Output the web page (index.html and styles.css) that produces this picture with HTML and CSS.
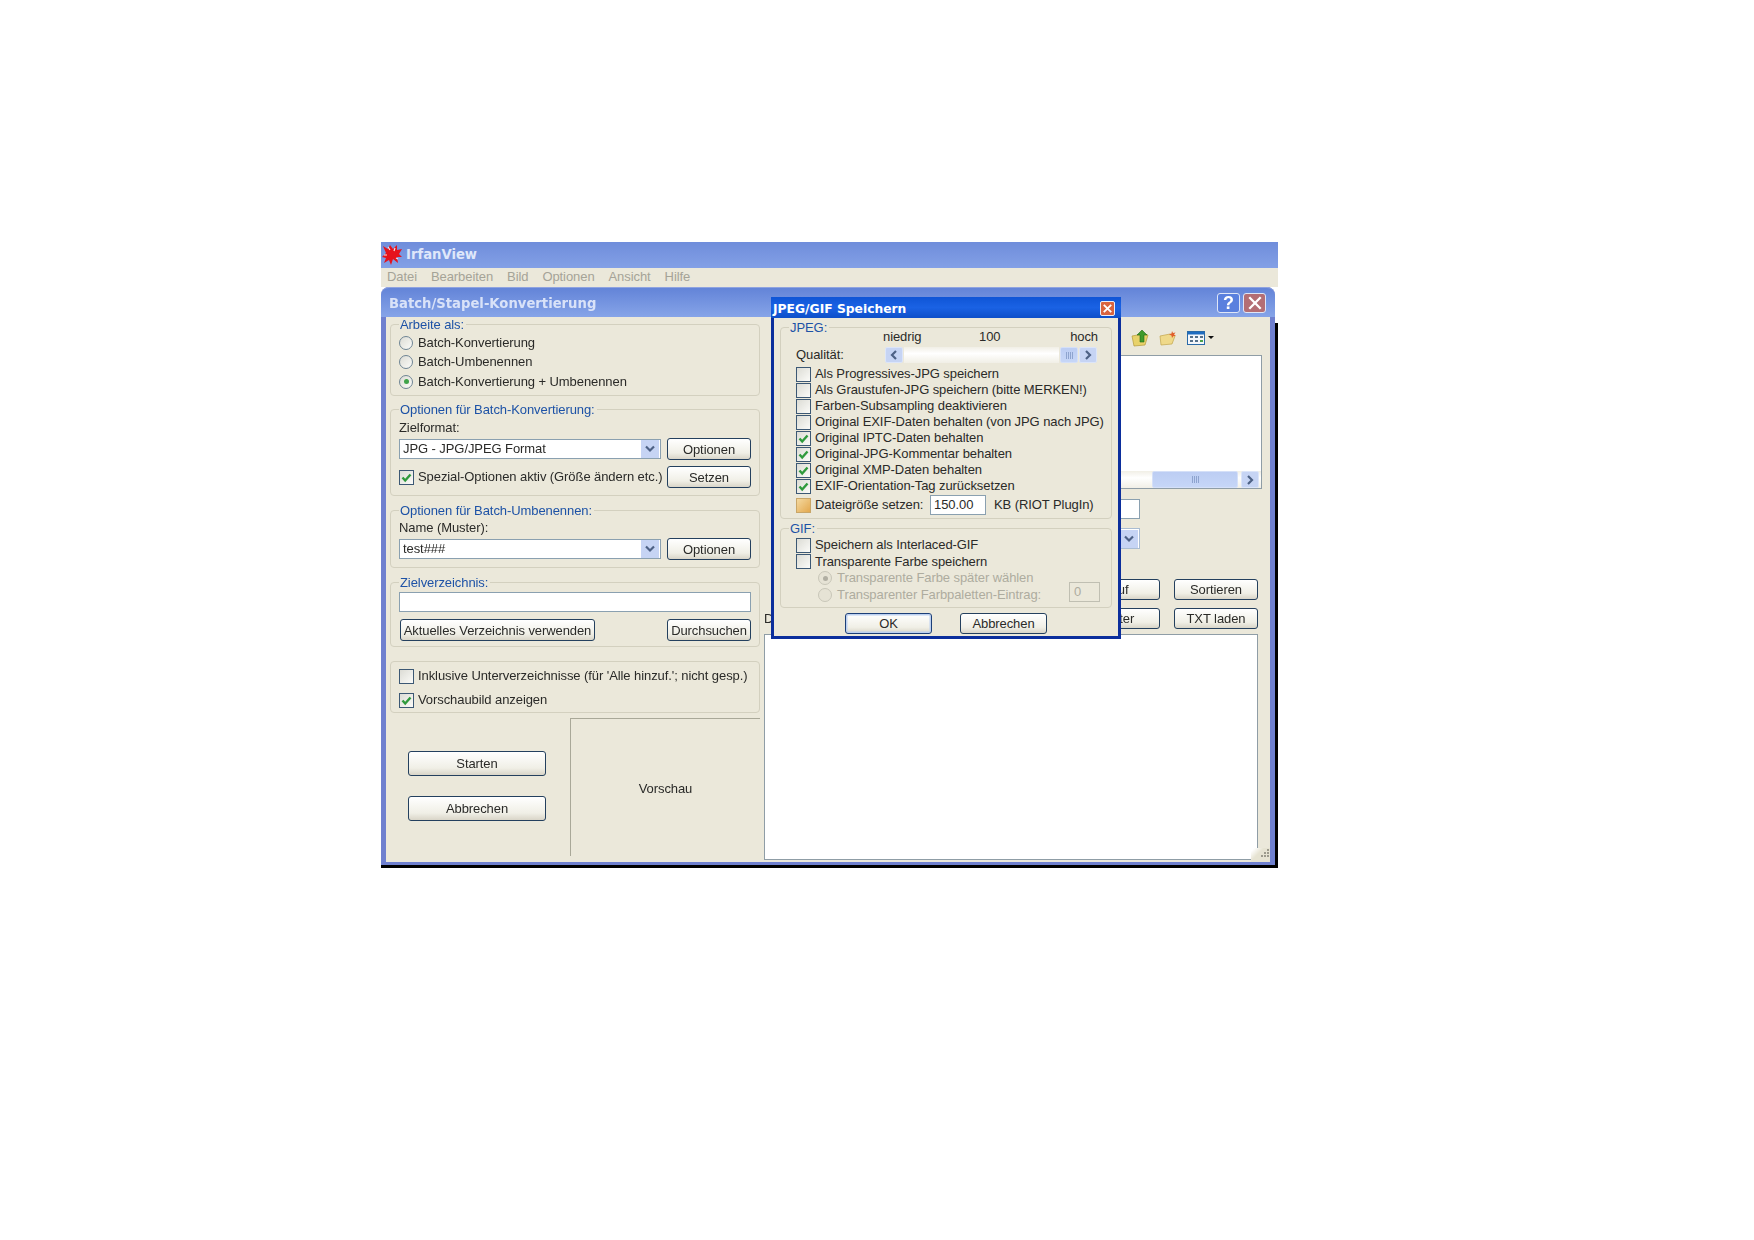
FILE: index.html
```html
<!DOCTYPE html>
<html lang="de">
<head>
<meta charset="utf-8">
<title>IrfanView</title>
<link rel="stylesheet" href="styles.css">
</head>
<body>
<svg class="defs" aria-hidden="true">
  <symbol id="check" viewBox="0 0 13 13"><path d="M2.5 6.500 5.200 9.500 10.500 3.500" fill="none" stroke="#2f9a3c" stroke-width="2.400"/></symbol>
  <symbol id="chev-down" viewBox="0 0 12 8"><path d="M2 1.500 6 5.500 10 1.500" fill="none" stroke="#4d6185" stroke-width="2.200"/></symbol>
  <symbol id="chev-left" viewBox="0 0 8 12"><path d="M6 2 2 6 6 10" fill="none" stroke="#4d6185" stroke-width="2.200"/></symbol>
  <symbol id="chev-right" viewBox="0 0 8 12"><path d="M2 2 6 6 2 10" fill="none" stroke="#4d6185" stroke-width="2.200"/></symbol>
</svg>
<div class="app">
  <div class="app-title">
    <svg class="logo" viewBox="0 0 20 20">
      <path d="M1 1 6 4 8 0 11 4 15 0 15 5 20 4 17 9 20 12 15 12 16 18 11 14 9 20 7 15 2 18 4 13 0 12 4 8Z" fill="#e6121c"/>
      <path d="M6 2 8 5M13 3 12 6M2 10 5 10M16 14 14 13" stroke="#f4e6e6" stroke-width="1.200"/>
    </svg>
    <span>IrfanView</span>
  </div>
  <div class="app-menu">
    <span>Datei</span><span>Bearbeiten</span><span>Bild</span><span>Optionen</span><span>Ansicht</span><span>Hilfe</span>
  </div>
  <div class="batch">
    <div class="batch-title">
      <span class="batch-title-text">Batch/Stapel-Konvertierung</span>
      <span class="cap cap-help">?</span>
      <span class="cap cap-close"><svg viewBox="0 0 14 14"><path d="M2 2 12 12M12 2 2 12" stroke="#fff" stroke-width="2"/></svg></span>
    </div>
    <div class="batch-body">
      <div class="left">
        <fieldset class="group g-work">
          <legend>Arbeite als:</legend>
          <label class="opt"><i class="radio"></i>Batch-Konvertierung</label>
          <label class="opt"><i class="radio"></i>Batch-Umbenennen</label>
          <label class="opt"><i class="radio on"></i>Batch-Konvertierung + Umbenennen</label>
        </fieldset>
        <fieldset class="group g-conv">
          <legend>Optionen für Batch-Konvertierung:</legend>
          <div class="cap-line">Zielformat:</div>
          <div class="ctl-row first">
            <div class="select"><span>JPG - JPG/JPEG Format</span><b class="drop"><svg><use href="#chev-down"/></svg></b></div>
            <button class="btn side">Optionen</button>
          </div>
          <div class="ctl-row second">
            <label class="opt grow"><i class="box"><svg><use href="#check"/></svg></i>Spezial-Optionen aktiv (Größe ändern etc.)</label>
            <button class="btn side">Setzen</button>
          </div>
        </fieldset>
        <fieldset class="group g-name">
          <legend>Optionen für Batch-Umbenennen:</legend>
          <div class="cap-line">Name (Muster):</div>
          <div class="ctl-row first">
            <div class="select"><span>test###</span><b class="drop"><svg><use href="#chev-down"/></svg></b></div>
            <button class="btn side">Optionen</button>
          </div>
        </fieldset>
        <fieldset class="group g-dir">
          <legend>Zielverzeichnis:</legend>
          <div class="field"></div>
          <div class="ctl-row apart">
            <button class="btn current">Aktuelles Verzeichnis verwenden</button>
            <button class="btn side">Durchsuchen</button>
          </div>
        </fieldset>
        <div class="group g-flags">
          <label class="opt"><i class="box"></i>Inklusive Unterverzeichnisse (für 'Alle hinzuf.'; nicht gesp.)</label>
          <label class="opt"><i class="box"><svg><use href="#check"/></svg></i>Vorschaubild anzeigen</label>
        </div>
        <div class="bottom">
          <div class="actions">
            <button class="btn action">Starten</button>
            <button class="btn action">Abbrechen</button>
          </div>
          <div class="preview">Vorschau</div>
        </div>
      </div>
      <div class="right">
        <div class="toolbar">
          <svg class="tool" viewBox="0 0 18 18">
            <path d="M1 7 12 5 17 6 14 16 3 17Z" fill="#e8d26a" stroke="#b59a3a" stroke-width=".7"/>
            <path d="M9 13V6H6L11 1 16 6H13V13Z" fill="#3f9a2c" stroke="#1f6a14" stroke-width=".6"/>
          </svg>
          <svg class="tool" viewBox="0 0 18 18">
            <path d="M1 7 11 5 16 7 13 15 2 16Z" fill="#efd98a" stroke="#c2a54a" stroke-width=".7"/>
            <path d="M13 2 14 4 16.500 3.500 15 5.500 17 7 14.500 7 13 9 12.500 6.500 10 5.500 12.500 4.500Z" fill="#e0602c"/>
          </svg>
          <svg class="tool view" viewBox="0 0 18 14">
            <rect x=".5" y=".5" width="17" height="13" fill="#f4f6fa" stroke="#2a6aa8"/>
            <rect x="1" y="1" width="16" height="2.500" fill="#1e6cc0"/>
            <path d="M3 5h3v2H3zM8 5h3v2H8zM13 5h3v2h-3zM3 9h3v2H3zM8 9h3v2H8z" fill="#55708a"/>
            <path d="M13 9h3v2h-3z" fill="#4aa04a"/>
          </svg>
          <i class="caret"></i>
        </div>
        <div class="files">
          <div class="hbar"><b class="bar-thumb"><i class="grip-lines"></i></b><b class="arrow"><svg><use href="#chev-right"/></svg></b></div>
        </div>
        <div class="short-field"></div>
        <div class="short-select"><b class="drop"><svg><use href="#chev-down"/></svg></b></div>
        <div class="list-btns">
          <button class="btn list-btn wide">Hinauf</button>
          <button class="btn list-btn">Sortieren</button>
        </div>
        <div class="list-btns next">
          <span class="list-label">Dateien:</span>
          <button class="btn list-btn wide">Hinunter</button>
          <button class="btn list-btn">TXT laden</button>
        </div>
        <div class="biglist"></div>
      </div>
    </div>
    <div class="resize">
      <svg viewBox="0 0 12 12"><path d="M9 1h2v2H9zM6 4h2v2H6zM9 4h2v2H9zM3 7h2v2H3zM6 7h2v2H6zM9 7h2v2H9z" fill="#9c9a8c"/></svg>
    </div>

    <div class="dialog">
      <div class="dlg-title">
        <span>JPEG/GIF Speichern</span>
        <span class="dlg-close"><svg viewBox="0 0 14 14"><path d="M3 3 11 11M11 3 3 11" stroke="#fff" stroke-width="2"/></svg></span>
      </div>
      <div class="dlg-body">
        <fieldset class="group g-jpeg">
          <legend>JPEG:</legend>
          <div class="scale"><span>niedrig</span><span>100</span><span>hoch</span></div>
          <div class="quality">
            <span class="q-label">Qualität:</span>
            <div class="slider">
              <b class="arrow"><svg><use href="#chev-left"/></svg></b>
              <b class="track"></b>
              <b class="bar-thumb small"><i class="grip-lines"></i></b>
              <b class="arrow"><svg><use href="#chev-right"/></svg></b>
            </div>
          </div>
          <div class="checks">
            <label class="opt"><i class="box"></i>Als Progressives-JPG speichern</label>
            <label class="opt"><i class="box"></i>Als Graustufen-JPG speichern (bitte MERKEN!)</label>
            <label class="opt"><i class="box"></i>Farben-Subsampling deaktivieren</label>
            <label class="opt"><i class="box"></i>Original EXIF-Daten behalten (von JPG nach JPG)</label>
            <label class="opt"><i class="box"><svg><use href="#check"/></svg></i>Original IPTC-Daten behalten</label>
            <label class="opt"><i class="box"><svg><use href="#check"/></svg></i>Original-JPG-Kommentar behalten</label>
            <label class="opt"><i class="box"><svg><use href="#check"/></svg></i>Original XMP-Daten behalten</label>
            <label class="opt"><i class="box"><svg><use href="#check"/></svg></i>EXIF-Orientation-Tag zurücksetzen</label>
          </div>
          <div class="size-row">
            <label class="opt size-label"><i class="box hot"></i>Dateigröße setzen:</label>
            <div class="num">150.00</div>
            <span>KB (RIOT PlugIn)</span>
          </div>
        </fieldset>
        <fieldset class="group g-gif">
          <legend>GIF:</legend>
          <div class="gif-inner">
            <div class="gif-rows">
              <label class="opt"><i class="box"></i>Speichern als Interlaced-GIF</label>
              <label class="opt"><i class="box"></i>Transparente Farbe speichern</label>
              <label class="opt off"><i class="radio on"></i>Transparente Farbe später wählen</label>
              <label class="opt off"><i class="radio"></i>Transparenter Farbpaletten-Eintrag:</label>
            </div>
            <div class="num-off">0</div>
          </div>
        </fieldset>
        <div class="dlg-actions">
          <button class="btn dlg-btn default">OK</button>
          <button class="btn dlg-btn">Abbrechen</button>
        </div>
      </div>
    </div>
  </div>
</div>
</body>
</html>
```
FILE: styles.css
```css
* { box-sizing: border-box; }
html, body { margin: 0; height: 1240px; background: #fff; overflow: hidden; }
body {
  padding: 242px 0 0 381px;
  font: 13px/14px "Liberation Sans", Arial, sans-serif;
  letter-spacing: -.08px;
  color: #2a2a28;
}
.defs { position: absolute; width: 0; height: 0; }

.app { width: 897px; filter: blur(.35px); }
.app-title {
  height: 26px;
  display: flex;
  align-items: center;
  gap: 4px;
  padding-left: 1px;
  background: linear-gradient(#6f8ddb, #83a0e6);
  color: #dfe7fa;
  font: bold 13.200px/26px "DejaVu Sans", sans-serif;
  letter-spacing: 0;
}
.logo { width: 20px; height: 20px; }
.app-menu {
  height: 19px;
  display: flex;
  align-items: center;
  gap: 14px;
  padding: 0 0 2px 6px;
  background: #ebe8da;
  color: #a5a397;
}

.batch {
  position: relative;
  width: 894px;
  height: 578px;
  border: solid #6f80cf;
  border-width: 0 5px 3px;
  border-radius: 8px 8px 0 0;
  background: #ebe8da;
  box-shadow: 0 3px 0 #000;
}
.batch::after {
  content: "";
  position: absolute;
  right: -8px;
  top: 36px;
  bottom: -6px;
  width: 3px;
  background: #000;
}
.batch-title {
  height: 30px;
  margin: 0 -5px;
  display: flex;
  align-items: center;
  gap: 3px;
  padding: 0 9px 0 8px;
  border-radius: 8px 8px 0 0;
  border-top: 1px solid #8fa3e0;
  background: linear-gradient(#6384d8, #86a4e8);
  color: #d9e2f8;
  font: bold 13.200px/28px "DejaVu Sans", sans-serif;
  letter-spacing: 0;
}
.batch-title-text { flex: 1; padding-top: 2px; }
.cap {
  width: 23px;
  height: 20px;
  display: flex;
  align-items: center;
  justify-content: center;
  border: 1px solid #dfe6f7;
  border-radius: 3px;
  color: #fff;
  font: bold 18px/20px "Liberation Sans", sans-serif;
}
.cap-help { background: #5a80de; }
.cap-close { background: #b46e74; }
.cap-close svg { width: 16px; height: 16px; }

.batch-body { display: flex; height: 545px; padding-left: 4px; gap: 4px; }
.left { width: 370px; flex: none; display: flex; flex-direction: column; }

.group {
  margin: 0;
  min-width: 0;
  border: 1px solid #d3d0bf;
  border-radius: 4px;
}
.group legend {
  height: 14px;
  padding: 1px 2px 0 1px;
  color: #1d52a6;
}
.g-work { height: 79px; padding: 2px 8px 0; }
.g-work .opt { height: 19.600px; }
.g-conv { height: 94px; margin-top: 6px; padding: 5px 8px 0; }
.g-name { height: 65px; margin-top: 7px; padding: 4px 8px 0; }
.g-dir  { height: 72px; margin-top: 7px; padding: 3px 8px 0; }
.g-flags { height: 52px; margin-top: 14px; padding: 5px 8px 0; display: flex; flex-direction: column; gap: 6px; }
.g-flags .opt { height: 18px; }

.cap-line { height: 14px; }
.ctl-row { display: flex; align-items: center; gap: 6px; height: 22px; }
.ctl-row.first { margin-top: 3px; }
.ctl-row.second { margin-top: 6px; }
.ctl-row.apart { margin-top: 7px; justify-content: space-between; }
.grow { flex: 1; min-width: 0; }

.opt { display: flex; align-items: center; gap: 4px; white-space: nowrap; }
.off { color: #aeac9f; margin-left: 22px; }

.box {
  flex: none;
  width: 15px;
  height: 15px;
  border: 1px solid #3c5874;
  background: linear-gradient(135deg, #dcdcd5, #fbfbf8);
}
.box svg { display: block; width: 13px; height: 13px; }
.box.hot { border-color: #c9a668; background: linear-gradient(135deg, #f4d9a0, #e3a84e); }
.radio {
  flex: none;
  position: relative;
  width: 14px;
  height: 14px;
  margin-right: 1px;
  border: 1px solid #6e8494;
  border-radius: 50%;
  background: linear-gradient(135deg, #dcdcd5, #fbfbf8);
}
.radio.on::after {
  content: "";
  position: absolute;
  inset: 3.500px;
  border-radius: 50%;
  background: #3fa34a;
}
.off .radio { border-color: #c8c6b8; background: #e6e3d5; }
.off .radio.on::after { background: #b0aea2; }

.btn {
  padding: 1px 0 0;
  border: 1px solid #24405e;
  border-radius: 3px;
  background: linear-gradient(#fff, #f0efe6 70%, #d9d5c8);
  color: #2a2a28;
  font: inherit;
  letter-spacing: inherit;
  white-space: nowrap;
}
.side { flex: none; width: 84px; height: 22px; }
.current { width: 195px; height: 22px; margin-left: 1px; }
.action { width: 138px; height: 25px; border-width: 1.500px; }

.select {
  flex: 1;
  height: 20px;
  display: flex;
  align-items: center;
  justify-content: space-between;
  padding: 0 1px 0 3px;
  border: 1px solid #8aa0b0;
  background: #fff;
}
.drop {
  width: 18px;
  height: 18px;
  display: flex;
  align-items: center;
  justify-content: center;
  background: #c6d4f4;
}
.drop svg { width: 12px; height: 8px; }
.field { height: 20px; border: 1px solid #8aa0b0; background: #fff; }

.bottom { display: flex; flex: 1; margin-top: 5px; }
.actions { width: 180px; display: flex; flex-direction: column; gap: 20px; padding: 33px 0 0 18px; }
.preview {
  width: 190px;
  height: 138px;
  padding-top: 2px;
  display: flex;
  align-items: center;
  justify-content: center;
  border: solid #a9a898;
  border-width: 1px 0 0 1px;
}

.right { flex: 1; display: flex; flex-direction: column; min-width: 0; }
.toolbar {
  height: 38px;
  padding: 3px 56px 0 0;
  display: flex;
  align-items: center;
  justify-content: flex-end;
  gap: 10px;
}
.tool { width: 18px; height: 18px; }
.tool.view { height: 14px; }
.caret {
  margin-left: -7px;
  width: 0;
  border: solid transparent;
  border-width: 3px 3px 0;
  border-top-color: #111;
}
.files {
  position: relative;
  height: 134px;
  margin: 0 8px 0 20px;
  border: 1px solid #8f9da6;
  background: #fff;
}
.hbar {
  position: absolute;
  left: 0; right: 0; bottom: 0;
  height: 17px;
  padding-right: 2px;
  display: flex;
  justify-content: flex-end;
  gap: 3px;
  background: linear-gradient(#f1efe6, #fff 40%, #f1efe6);
}
.bar-thumb {
  width: 86px;
  display: flex;
  align-items: center;
  justify-content: center;
  background: linear-gradient(#bccdf3, #c6d6f7);
  border: 1px solid #d5e0f8;
  border-radius: 2px;
}
.bar-thumb.small { width: 18px; }
.grip-lines {
  width: 7px;
  height: 7px;
  background: repeating-linear-gradient(90deg, #8ea4cf 0 1px, transparent 1px 2px);
}
.arrow {
  width: 18px;
  display: flex;
  align-items: center;
  justify-content: center;
  background: #c6d4f4;
  border: 1px solid #dce5f9;
  border-radius: 2px;
}
.arrow svg { width: 8px; height: 12px; }
.short-field {
  width: 356px;
  height: 20px;
  margin: 10px 0 0 20px;
  border: 1px solid #8aa0b0;
  background: #fff;
}
.short-select {
  width: 356px;
  height: 21px;
  margin: 9px 0 0 20px;
  display: flex;
  justify-content: flex-end;
  padding: 1px;
  border: 1px solid #a9bcd2;
  background: #fff;
}
.list-btns {
  height: 21px;
  margin: 30px 12px 0 0;
  display: flex;
  justify-content: flex-end;
  align-items: center;
  gap: 14px;
}
.list-btns.next { margin-top: 8px; }
.list-label { flex: 1; }
.list-btn { width: 84px; height: 21px; }
.list-btn.wide { width: 100px; }
.biglist {
  height: 226px;
  margin: 5px 12px 0 0;
  border: 1px solid #8f9da6;
  background: #fff;
}

.resize {
  position: absolute;
  right: 0;
  bottom: 0;
  width: 19px;
  height: 14px;
  display: flex;
  justify-content: flex-end;
  background: linear-gradient(135deg, #fff 10%, #e6e3d2 40%);
}
.resize svg { width: 12px; height: 12px; }

.dialog {
  position: absolute;
  left: 385px;
  top: 10px;
  width: 350px;
  height: 342px;
  border: solid #0b2e9c;
  border-width: 0 3px 3px;
  background: #ebe8da;
}
.dlg-title {
  height: 21px;
  margin: 0 -3px;
  padding: 0 6px 0 2px;
  display: flex;
  align-items: center;
  justify-content: space-between;
  background: linear-gradient(#0f55d6, #1a62e4 50%, #0d4fc9);
  color: #fff;
  font: bold 12.300px/21px "DejaVu Sans", sans-serif;
  letter-spacing: 0;
}
.dlg-title > span:first-child { padding-top: 3px; }
.dlg-close {
  width: 15px;
  height: 15px;
  margin-top: 2px;
  border: 1px solid #e8eefb;
  border-radius: 2px;
  background: #d9643f;
}
.dlg-close svg { display: block; width: 13px; height: 13px; }
.dlg-body { padding: 2px 6px 0; }
.g-jpeg { height: 199px; padding: 0 13px 0 15px; }
.g-jpeg legend, .g-gif legend { margin-left: -7px; }
.scale {
  margin-top: -4px;
  height: 14px;
  padding-left: 87px;
  display: grid;
  grid-template-columns: 96px 1fr auto;
}
.quality { margin-top: 3px; height: 16px; display: flex; align-items: center; }
.q-label { width: 89px; }
.slider { width: 212px; height: 16px; display: flex; gap: 1px; }
.track { flex: 1; background: linear-gradient(#f1efe6, #fff 40%, #f1efe6); }
.checks { margin-top: 3px; }
.checks .opt { height: 16px; }
.size-row { margin-top: 1px; height: 20px; display: flex; align-items: center; white-space: nowrap; }
.size-label { width: 127px; }
.num {
  width: 56px;
  height: 20px;
  margin-left: 7px;
  padding-left: 3px;
  border: 1px solid #8aa0b0;
  background: #fff;
  line-height: 17px;
}
.size-row > span { margin-left: 8px; }
.g-gif { height: 87px; margin-top: 2px; padding: 2px 11px 0 15px; }
.gif-inner { display: flex; justify-content: space-between; align-items: flex-end; }
.gif-rows .opt { height: 16.500px; }
.num-off {
  width: 31px;
  height: 20px;
  margin-bottom: 1px;
  padding-left: 4px;
  border: 1px solid #c0bfb2;
  color: #aeac9f;
  line-height: 17px;
}
.dlg-actions { margin-top: 5px; display: flex; justify-content: center; gap: 28px; }
.dlg-btn { width: 87px; height: 21px; }
.dlg-btn.default { border: 1px solid #1c3f78; box-shadow: inset 0 0 0 1.500px #bcd0f0; }
```
